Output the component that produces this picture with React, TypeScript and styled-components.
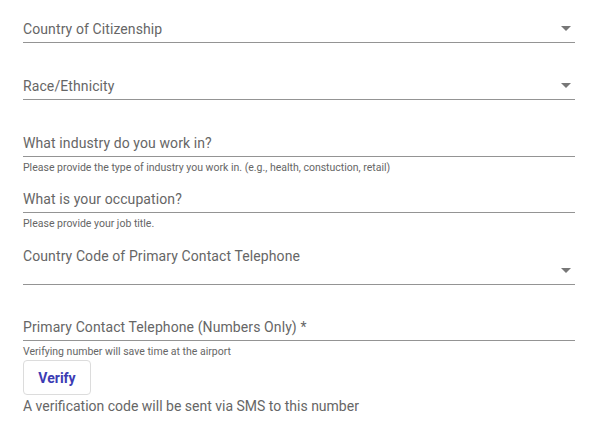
import React from 'react';
import styled, { createGlobalStyle } from 'styled-components';

const GlobalStyle = createGlobalStyle`
  html, body {
    margin: 0;
    padding: 0;
    background: #ffffff;
  }
  body {
    font-family: Roboto, 'Helvetica Neue', Arial, sans-serif;
  }
`;

const Form = styled.div`
  width: 552px;
  padding: 12px 0 0 23px;
  display: flex;
  flex-direction: column;
`;

const Field = styled.div<{ $top: number; $tall?: boolean }>`
  position: relative;
  margin-top: ${p => p.$top}px;
  height: ${p => (p.$tall ? 45 : 30)}px;
  border-bottom: 1px solid #949494;
  display: flex;
  align-items: flex-start;
`;

const Label = styled.div`
  font-size: 14px;
  line-height: 20px;
  padding-top: 7px;
  color: #666666;
  letter-spacing: 0.1px;
`;

const Arrow = styled.svg`
  position: absolute;
  right: 4px;
  bottom: 11px;
  width: 10px;
  height: 5px;
`;

const Helper = styled.div<{ $after: number }>`
  font-size: 10.5px;
  line-height: 12px;
  color: #666666;
  margin-top: 5px;
  margin-bottom: ${p => p.$after}px;
`;

const VerifyButton = styled.button`
  width: 68px;
  height: 35px;
  border: 1px solid #dcdcdc;
  border-radius: 4px;
  background: #ffffff;
  color: #3c3cb4;
  font-family: Roboto, Arial, sans-serif;
  font-weight: 700;
  font-size: 14px;
  padding: 0;
  cursor: pointer;
`;

const Note = styled.div`
  margin-top: 2px;
  font-size: 14px;
  line-height: 18px;
  color: #666666;
`;

const DropArrow = () => (
  <Arrow viewBox="0 0 10 5">
    <path d="M0 0 L10 0 L5 5 Z" fill="#777777" />
  </Arrow>
);

export default function App() {
  return (
    <>
      <GlobalStyle />
      <Form>
        <Field $top={0}>
          <Label>Country of Citizenship</Label>
          <DropArrow />
        </Field>
        <Field $top={26}>
          <Label>Race/Ethnicity</Label>
          <DropArrow />
        </Field>
        <Field $top={26}>
          <Label>What industry do you work in?</Label>
        </Field>
        <Helper $after={8}>Please provide the type of industry you work in. (e.g., health, constuction, retail)</Helper>
        <Field $top={0}>
          <Label>What is your occupation?</Label>
        </Field>
        <Helper $after={9}>Please provide your job title.</Helper>
        <Field $top={0} $tall>
          <Label>Country Code of Primary Contact Telephone</Label>
          <DropArrow />
        </Field>
        <Field $top={25}>
          <Label>Primary Contact Telephone (Numbers Only) *</Label>
        </Field>
        <Helper $after={2}>Verifying number will save time at the airport</Helper>
        <div>
          <VerifyButton>Verify</VerifyButton>
        </div>
        <Note>A verification code will be sent via SMS to this number</Note>
      </Form>
    </>
  );
}
